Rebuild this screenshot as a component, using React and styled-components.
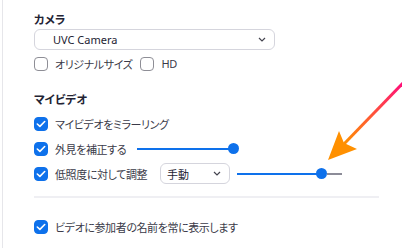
import styled, { createGlobalStyle } from 'styled-components';

const GlobalStyle = createGlobalStyle`
  html, body {
    margin: 0;
    padding: 0;
    background: #ffffff;
  }
  body {
    font-family: 'Noto Sans', 'Noto Sans CJK JP', sans-serif;
    font-feature-settings: 'palt';
    color: #3a3a48;
  }
`;

const Page = styled.div`
  position: relative;
  width: 402px;
  height: 248px;
  overflow: hidden;
  box-sizing: border-box;
`;

const Panel = styled.div`
  display: flex;
  flex-direction: column;
  margin-left: 2px;
  height: 100%;
  box-sizing: border-box;
  border-left: 1px solid #e6e6ea;
  padding: 12px 0 0 31px;
`;

const Heading = styled.div`
  height: 16px;
  line-height: 16px;
  font-size: 11.5px;
  font-weight: 700;
  color: #232333;
  margin-top: ${(p) => p.$top || 0}px;
`;

const Select = styled.div`
  display: flex;
  align-items: center;
  justify-content: space-between;
  box-sizing: border-box;
  width: ${(p) => p.$width}px;
  height: 21px;
  margin-top: ${(p) => p.$top || 0}px;
  margin-left: ${(p) => p.$left || 0}px;
  padding: 0 8px 0 ${(p) => p.$pad}px;
  border: 1px solid #d5d5dd;
  border-radius: 6px;
  font-size: 11px;
  color: #232333;
  background: #fff;
  flex-shrink: 0;
`;

const Row = styled.div`
  display: flex;
  align-items: center;
  height: 21px;
  margin-top: ${(p) => p.$top || 0}px;
`;

const Check = styled.label`
  display: flex;
  align-items: center;
  margin-right: ${(p) => p.$gap || 0}px;
`;

const Box = styled.span`
  display: flex;
  align-items: center;
  justify-content: center;
  box-sizing: border-box;
  width: 14px;
  height: 14px;
  border-radius: 4px;
  border: 1px solid ${(p) => (p.$on ? '#0e71eb' : '#8e8e96')};
  background: ${(p) => (p.$on ? '#0e71eb' : '#fff')};
  flex-shrink: 0;
`;

const Label = styled.span`
  margin-left: 7px;
  font-size: 11px;
  letter-spacing: -0.4px;
  color: #3a3a48;
  white-space: nowrap;
`;

const Slider = styled.div`
  display: flex;
  align-items: center;
  margin-left: ${(p) => p.$left}px;
`;

const Track = styled.div`
  width: ${(p) => p.$width}px;
  height: 2px;
  background: #0e71eb;
`;

const Knob = styled.div`
  width: 11px;
  height: 11px;
  border-radius: 50%;
  background: #0e71eb;
  margin-left: -5px;
`;

const Tail = styled.div`
  width: 15px;
  height: 2px;
  background: #8c8c98;
`;

const Divider = styled.div`
  width: 345px;
  height: 2px;
  background: #efeff3;
  margin-top: 12px;
`;

const Overlay = styled.svg`
  position: absolute;
  left: 0;
  top: 0;
  pointer-events: none;
`;

const Chevron = () => (
  <svg width="8" height="5" viewBox="0 0 8 5">
    <path d="M1 1 L4 4 L7 1" fill="none" stroke="#44444f" strokeWidth="1.2" />
  </svg>
);

const Tick = () => (
  <svg width="10" height="8" viewBox="0 0 10 8">
    <path d="M1.3 4 L3.9 6.4 L8.7 1.5" fill="none" stroke="#fff" strokeWidth="1.6" strokeLinecap="round" strokeLinejoin="round" />
  </svg>
);

const CheckItem = ({ on, label, gap }) => (
  <Check $gap={gap}>
    <Box $on={on}>{on && <Tick />}</Box>
    <Label>{label}</Label>
  </Check>
);

const Arrow = () => (
  <Overlay width="402" height="248" viewBox="0 0 402 248">
    <defs>
      <linearGradient id="arrowGrad" gradientUnits="userSpaceOnUse" x1="402" y1="84" x2="344" y2="144">
        <stop offset="0" stopColor="#ff0f78" />
        <stop offset="0.55" stopColor="#ff5a33" />
        <stop offset="1" stopColor="#ff9000" />
      </linearGradient>
    </defs>
    <line x1="403" y1="83" x2="343" y2="145" stroke="url(#arrowGrad)" strokeWidth="3" />
    <polygon points="328,160 339,131 344,143 357,149" fill="#ff9000" />
  </Overlay>
);

export default function App() {
  return (
    <Page>
      <GlobalStyle />
      <Panel>
        <Heading>カメラ</Heading>
        <Select $width={241} $pad={18} $top={1}>
          <span>UVC Camera</span>
          <Chevron />
        </Select>
        <Row $top={3}>
          <CheckItem label="オリジナルサイズ" gap={8} />
          <CheckItem label="HD" />
        </Row>
        <Heading $top={18}>マイビデオ</Heading>
        <Row $top={5}>
          <CheckItem on label="マイビデオをミラーリング" />
        </Row>
        <Row $top={4}>
          <CheckItem on label="外見を補正する" />
          <Slider $left={11}>
            <Track $width={96} />
            <Knob />
          </Slider>
        </Row>
        <Row $top={4}>
          <CheckItem on label="低照度に対して調整" />
          <Select $width={70} $pad={6} $left={13}>
            <span>手動</span>
            <Chevron />
          </Select>
          <Slider $left={7}>
            <Track $width={84} />
            <Knob />
            <Tail />
          </Slider>
        </Row>
        <Divider />
        <Row $top={18}>
          <CheckItem on label="ビデオに参加者の名前を常に表示します" />
        </Row>
      </Panel>
      <Arrow />
    </Page>
  );
}
